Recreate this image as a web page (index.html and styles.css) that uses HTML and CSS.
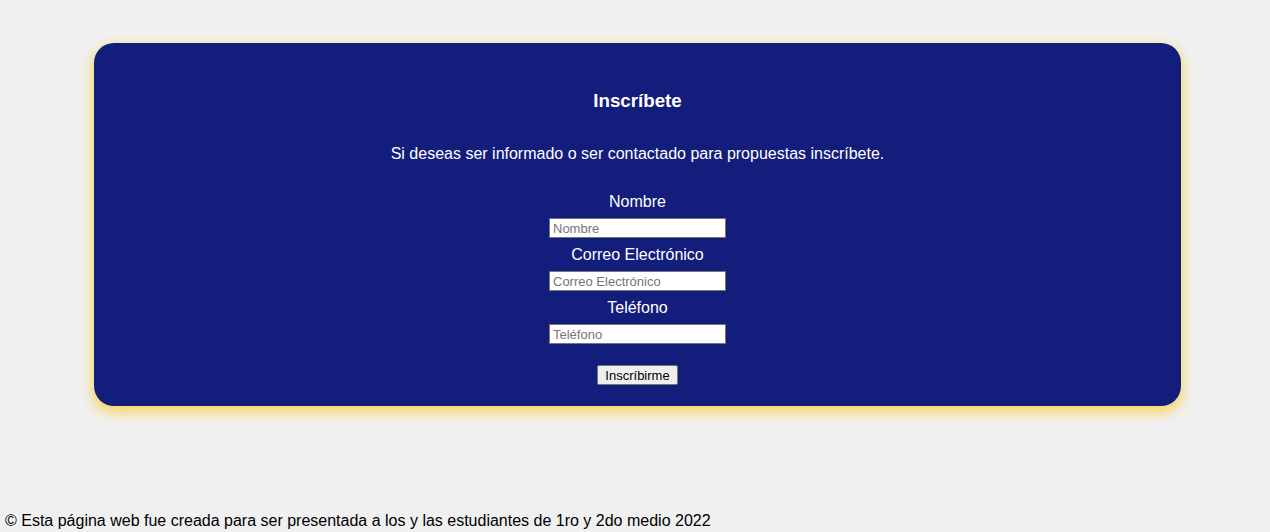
FILE: index.html
```html
<!DOCTYPE html>
<html lang="es">
<head>
<meta charset="utf-8">
<title>Inscríbete</title>
<link rel="stylesheet" href="styles.css">
</head>
<body>
<main class="page">
  <section class="card">
    <h2 class="title">Inscríbete</h2>
    <p class="intro">Si deseas ser informado o ser contactado para propuestas inscríbete.</p>
    <form class="form">
      <label class="label" for="nombre">Nombre</label>
      <input class="field" id="nombre" type="text" placeholder="Nombre">
      <label class="label" for="correo">Correo Electrónico</label>
      <input class="field" id="correo" type="email" placeholder="Correo Electrónico">
      <label class="label" for="tel">Teléfono</label>
      <input class="field" id="tel" type="tel" placeholder="Teléfono">
      <button class="btn" type="button">Inscríbirme</button>
    </form>
  </section>
</main>
<footer class="footer">© Esta página web fue creada para ser presentada a los y las estudiantes de 1ro y 2do medio 2022</footer>
</body>
</html>
```
FILE: styles.css
```css
html, body {
  margin: 0;
  padding: 0;
}
body {
  background: #f0f0f0;
  font-family: "Liberation Sans", Arial, sans-serif;
  color: #000;
  height: 532px;
  overflow: hidden;
}
.page {
  padding: 43px 89px 0 94px;
}
.card {
  background: #131d7c;
  border-radius: 20px;
  box-shadow: 0 5px 12px 2px rgba(244, 212, 80, 0.85);
  height: 363px;
  box-sizing: border-box;
  padding-top: 47px;
  color: #fff;
  text-align: center;
}
.title {
  margin: 0;
  font-size: 18.72px;
  line-height: 22px;
  font-weight: bold;
}
.intro {
  margin: 33px 0 0;
  font-size: 16px;
  line-height: 18px;
}
.form {
  display: flex;
  flex-direction: column;
  align-items: center;
  margin-top: 30px;
}
.label {
  font-size: 16px;
  line-height: 18px;
  display: block;
}
.field {
  box-sizing: border-box;
  width: 177px;
  height: 20px;
  margin: 7px 0 8px;
  padding: 1px 3px;
  border: 1px solid #767676;
  border-radius: 0;
  background: #fff;
  font-family: "Liberation Sans", Arial, sans-serif;
  font-size: 13px;
  color: #000;
}
.field::placeholder {
  color: #757575;
}
.btn {
  box-sizing: border-box;
  width: 81px;
  height: 20px;
  margin-top: 13px;
  padding: 0;
  border: 1px solid #767676;
  border-radius: 2px;
  background: #efefef;
  font-family: "Liberation Sans", Arial, sans-serif;
  font-size: 13px;
  color: #000;
}
.footer {
  margin-top: 106px;
  padding-left: 5px;
  font-size: 16px;
  line-height: 18px;
}
```
